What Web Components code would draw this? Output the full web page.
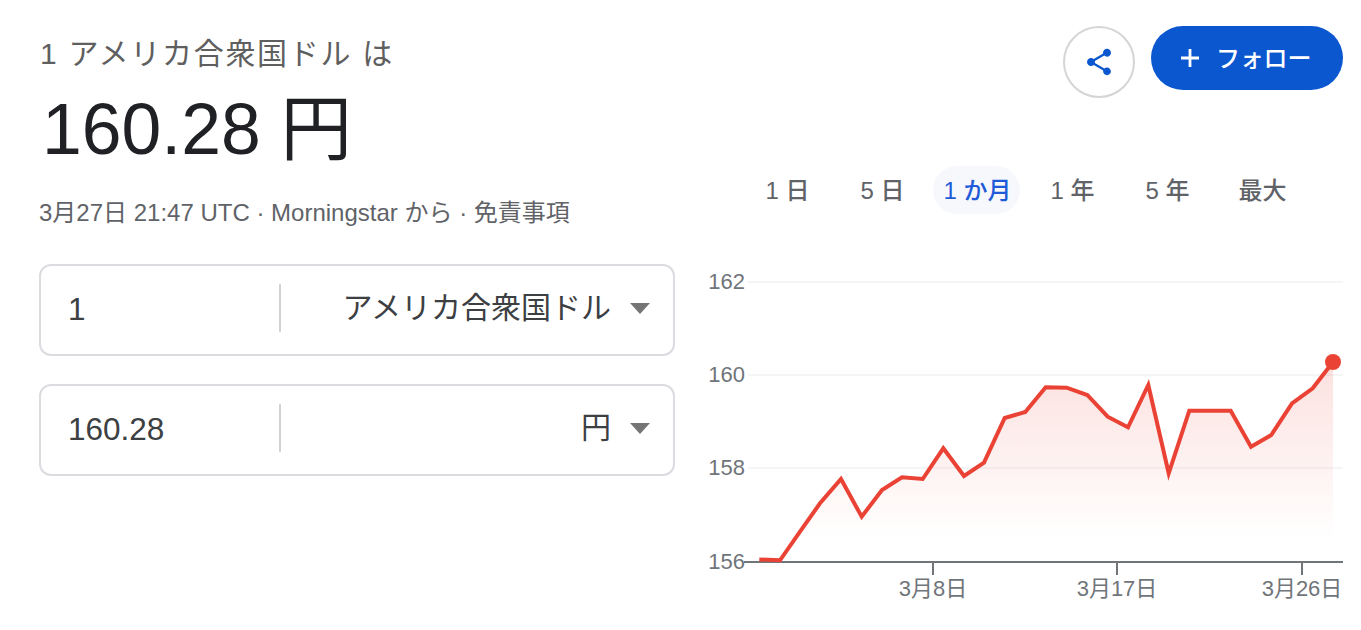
<!DOCTYPE html>
<html lang="ja">
<head>
<meta charset="utf-8">
<title>USD JPY</title>
<style>
  html, body { margin: 0; background: #fff; }
  body { font-family: "Liberation Sans", "Noto Sans CJK JP", sans-serif; }
</style>
</head>
<body>
<currency-panel>
  <rate-summary slot="left" from="1 アメリカ合衆国ドル は" value="160.28 円" note="3月27日 21:47 UTC · Morningstar から · 免責事項"></rate-summary>
  <convert-row slot="left" amount="1" unit="アメリカ合衆国ドル"></convert-row>
  <convert-row slot="left" amount="160.28" unit="円"></convert-row>
  <action-bar slot="right"></action-bar>
  <range-tabs slot="right"></range-tabs>
  <rate-chart slot="right"></rate-chart>
</currency-panel>

<script>
class CurrencyPanel extends HTMLElement {
  constructor() {
    super();
    const shadow = this.attachShadow({ mode: 'open' });
    shadow.innerHTML = `
      <style>
        :host { display: flex; width: 1303px; height: 630px; padding-left: 40px; padding-right: 18px; }
        .left { width: 634px; flex: none; }
        .right { flex: 1; display: flex; flex-direction: column; }
      </style>
      <div class="left"><slot name="left"></slot></div>
      <div class="right"><slot name="right"></slot></div>
    `;
  }
}

class RateSummary extends HTMLElement {
  constructor() {
    super();
    const shadow = this.attachShadow({ mode: 'open' });
    shadow.innerHTML = `
      <style>
        :host { display: block; height: 264px; }
        .from { padding-top: 34px; font-size: 30px; line-height: 40px; color: #5f5f5f; letter-spacing: 1.7px; white-space: nowrap; }
        .value { margin: 10px 0 0 2px; font-size: 71.5px; line-height: 90px; color: #202124; white-space: nowrap; }
        .note { margin-top: 21px; font-size: 24px; line-height: 36px; color: #5f6368; margin-left: -1px; white-space: nowrap; }
      </style>
      <div class="from" id="from"></div>
      <div class="value" id="value"></div>
      <div class="note" id="note"></div>
    `;
  }
  connectedCallback() {
    for (const key of ['from', 'value', 'note']) {
      this.shadowRoot.getElementById(key).textContent = this.getAttribute(key);
    }
  }
}

class ConvertRow extends HTMLElement {
  constructor() {
    super();
    const shadow = this.attachShadow({ mode: 'open' });
    shadow.innerHTML = `
      <style>
        :host { display: block; margin: 0 -1px 28px; }
        .box {
          box-sizing: border-box; height: 92px; padding-bottom: 4px; display: flex; align-items: center;
          border: 2px solid #dadce0; border-radius: 12px; background: #fff; color: #3c4043;
          font-size: 30px;
        }
        .amount { width: 238px; flex: none; box-sizing: border-box; padding: 2px 0 0 27px; font-size: 31.5px; }
        .rule { width: 2px; height: 48px; background: #d2d2d2; flex: none; }
        .unit { flex: 1; text-align: right; white-space: nowrap; margin-bottom: 6px; }
        svg { width: 20px; height: 12px; margin: 0 23px 0 19px; flex: none; }
      </style>
      <div class="box">
        <div class="amount" id="amount"></div>
        <div class="rule"></div>
        <div class="unit" id="unit"></div>
        <svg viewBox="0 0 20 12"><path d="M0 1h20L10 12z" fill="#757575"/></svg>
      </div>
    `;
  }
  connectedCallback() {
    this.shadowRoot.getElementById('amount').textContent = this.getAttribute('amount');
    this.shadowRoot.getElementById('unit').textContent = this.getAttribute('unit');
  }
}

class ActionBar extends HTMLElement {
  constructor() {
    super();
    const shadow = this.attachShadow({ mode: 'open' });
    shadow.innerHTML = `
      <style>
        :host { display: flex; justify-content: flex-end; gap: 16px; padding-top: 26px; height: 166px; box-sizing: border-box; flex: none; }
        .share {
          box-sizing: border-box; width: 72px; height: 72px; border: 2px solid #d5d5d5; border-radius: 50%;
          display: flex; align-items: center; justify-content: center;
        }
        .share svg { width: 32px; height: 32px; }
        .follow {
          box-sizing: border-box; width: 192px; height: 64px; border-radius: 32px; background: #0b57d0; color: #fff;
          display: flex; align-items: center; gap: 16px; padding-left: 29px;
          font-size: 24px; font-weight: 500; letter-spacing: -.2px;
        }
        .follow svg { width: 20px; height: 20px; flex: none; }
        .follow span { margin-bottom: 4px; }
      </style>
      <div class="share">
        <svg viewBox="0 0 24 24"><path fill="#0b57d0" d="M18 16.08c-.76 0-1.44.3-1.96.77L8.91 12.7c.05-.23.09-.46.09-.7s-.04-.47-.09-.7l7.05-4.11c.54.5 1.25.81 2.04.81 1.66 0 3-1.34 3-3s-1.34-3-3-3-3 1.34-3 3c0 .24.04.47.09.7L8.04 9.81C7.5 9.31 6.79 9 6 9c-1.66 0-3 1.34-3 3s1.34 3 3 3c.79 0 1.5-.31 2.04-.81l7.12 4.16c-.05.21-.08.43-.08.65 0 1.61 1.31 2.92 2.92 2.92 1.61 0 2.92-1.31 2.92-2.92s-1.31-2.92-2.92-2.92z"/></svg>
      </div>
      <div class="follow">
        <svg viewBox="0 0 20 20"><path fill="#fff" d="M8.600 1h2.800v7.600H19v2.800h-7.600V19H8.600v-7.600H1V8.600h7.600z"/></svg>
        <span>フォロー</span>
      </div>
    `;
  }
}

class RangeTabs extends HTMLElement {
  constructor() {
    super();
    const shadow = this.attachShadow({ mode: 'open' });
    const labels = ['1 日', '5 日', '1 か月', '1 年', '5 年', '最大'];
    shadow.innerHTML = `
      <style>
        :host { display: grid; grid-template-columns: repeat(6, 87px); gap: 8px; margin-left: 69px; height: 48px; flex: none; }
        div {
          box-sizing: border-box; padding: 0 0 4px 2px;
          display: flex; align-items: center; justify-content: center; border-radius: 24px;
          font-size: 24px; font-weight: 500; color: #5f6368; white-space: nowrap;
        }
        .active { background: #f6f8fc; color: #1f5bd8; }
      </style>
      ${labels.map((t, i) => `<div class="${i === 2 ? 'active' : ''}">${t}</div>`).join('')}
    `;
  }
}

class RateChart extends HTMLElement {
  constructor() {
    super();
    const shadow = this.attachShadow({ mode: 'open' });
    const pts = [
      [759.3, 559.5], [780, 560.3], [800, 531.7], [820, 503.3], [841, 479], [861.7, 516.7],
      [882, 490], [902, 477.3], [922.7, 479], [943.3, 448.3], [964, 476], [984, 462.7],
      [1004.7, 418], [1025.3, 412], [1045.7, 387.3], [1066.7, 387.7], [1087.3, 395],
      [1107.7, 416.7], [1128, 427.3], [1148.3, 385], [1168.7, 473.3], [1189.3, 410.7],
      [1210, 410.7], [1230.7, 410.7], [1251, 446.7], [1271.3, 435], [1292, 403.3],
      [1312.7, 388.3], [1333, 362]
    ];
    const line = pts.map(p => p.join(',')).join(' ');
    const ys = [[162, 282], [160, 375], [158, 468]];
    const ticks = [[933, '3月8日'], [1117, '3月17日'], [1302, '3月26日']];
    shadow.innerHTML = `
      <style>
        :host { display: block; margin-top: 26px; flex: none; height: 370px; }
        svg { display: block; }
        text { font-family: "Liberation Sans", "Noto Sans CJK JP", sans-serif; font-size: 22px; fill: #70757a; }
      </style>
      <svg width="669" height="370" viewBox="674 240 669 370">
        <defs>
          <linearGradient id="area" gradientUnits="userSpaceOnUse" x1="0" y1="362" x2="0" y2="540">
            <stop offset="0" stop-color="#ea4335" stop-opacity=".16"/>
            <stop offset="1" stop-color="#ea4335" stop-opacity="0"/>
          </linearGradient>
        </defs>
        ${ys.map(([v, y]) => `
          <line x1="748" x2="1343" y1="${y}" y2="${y}" stroke="#f5f5f5" stroke-width="2"/>
          <text x="745" y="${y + 7}" text-anchor="end">${v}</text>`).join('')}
        <text x="745" y="569" text-anchor="end">156</text>
        <polygon points="759.3,562 ${line} 1333,562" fill="url(#area)"/>
        <line x1="744" x2="1343" y1="562" y2="562" stroke="#70757a" stroke-width="2"/>
        ${ticks.map(([x, t]) => `
          <line x1="${x}" x2="${x}" y1="562" y2="575" stroke="#70757a" stroke-width="2"/>
          <text x="${x}" y="596" text-anchor="middle">${t}</text>`).join('')}
        <polyline points="${line}" fill="none" stroke="#ea4335" stroke-width="4" stroke-linejoin="miter"/>
        <circle cx="1333" cy="362" r="8" fill="#ea4335"/>
      </svg>
    `;
  }
}

customElements.define('currency-panel', CurrencyPanel);
customElements.define('rate-summary', RateSummary);
customElements.define('convert-row', ConvertRow);
customElements.define('action-bar', ActionBar);
customElements.define('range-tabs', RangeTabs);
customElements.define('rate-chart', RateChart);
</script>
</body>
</html>
